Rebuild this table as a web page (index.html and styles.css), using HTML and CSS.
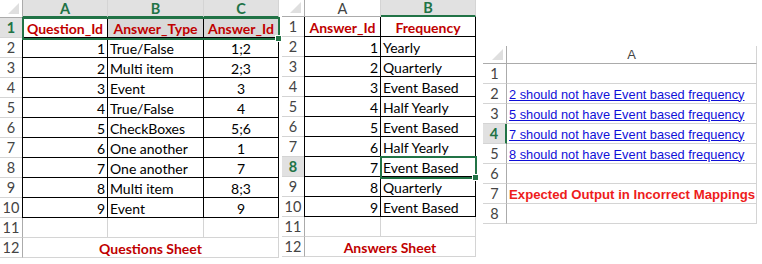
FILE: index.html
```html
<!DOCTYPE html>
<html>
<head>
<meta charset="utf-8">
<link rel="stylesheet" href="styles.css">
</head>
<body>
<div class="page">
  <div class="sheet s1">
    <div class="corner"></div>
    <div class="ch sel">A</div>
    <div class="ch sel">B</div>
    <div class="ch sel">C</div>

    <div class="rh rsel">1</div>
    <div class="c t tl hd ctr">Question_Id</div>
    <div class="c t hd ctr tint">Answer_Type</div>
    <div class="c t hd ctr tint">Answer_Id</div>

    <div class="rh">2</div><div class="c t tl r">1</div><div class="c t">True/False</div><div class="c t ctr">1;2</div>
    <div class="rh">3</div><div class="c t tl r">2</div><div class="c t">Multi item</div><div class="c t ctr">2;3</div>
    <div class="rh">4</div><div class="c t tl r">3</div><div class="c t">Event</div><div class="c t ctr">3</div>
    <div class="rh">5</div><div class="c t tl r">4</div><div class="c t">True/False</div><div class="c t ctr">4</div>
    <div class="rh">6</div><div class="c t tl r">5</div><div class="c t">CheckBoxes</div><div class="c t ctr">5;6</div>
    <div class="rh">7</div><div class="c t tl r">6</div><div class="c t">One another</div><div class="c t ctr">1</div>
    <div class="rh">8</div><div class="c t tl r">7</div><div class="c t">One another</div><div class="c t ctr">7</div>
    <div class="rh">9</div><div class="c t tl r">8</div><div class="c t">Multi item</div><div class="c t ctr">8;3</div>
    <div class="rh">10</div><div class="c t tl r">9</div><div class="c t">Event</div><div class="c t ctr">9</div>
    <div class="rh">11</div><div class="c"></div><div class="c"></div><div class="c"></div>
    <div class="rh">12</div><div class="c span3 hd ctr">Questions Sheet</div>

    <div class="selbox sel1"><span class="handle"></span></div>
  </div>

  <div class="sheet s2">
    <div class="corner"></div>
    <div class="ch">A</div>
    <div class="ch sel">B</div>

    <div class="rh">1</div><div class="c t tl hd ctr">Answer_Id</div><div class="c t hd ctr">Frequency</div>
    <div class="rh">2</div><div class="c t tl r">1</div><div class="c t">Yearly</div>
    <div class="rh">3</div><div class="c t tl r">2</div><div class="c t">Quarterly</div>
    <div class="rh">4</div><div class="c t tl r">3</div><div class="c t">Event Based</div>
    <div class="rh">5</div><div class="c t tl r">4</div><div class="c t">Half Yearly</div>
    <div class="rh">6</div><div class="c t tl r">5</div><div class="c t">Event Based</div>
    <div class="rh">7</div><div class="c t tl r">6</div><div class="c t">Half Yearly</div>
    <div class="rh rsel">8</div><div class="c t tl r">7</div><div class="c t">Event Based</div>
    <div class="rh">9</div><div class="c t tl r">8</div><div class="c t">Quarterly</div>
    <div class="rh">10</div><div class="c t tl r">9</div><div class="c t">Event Based</div>
    <div class="rh">11</div><div class="c"></div><div class="c"></div>
    <div class="rh">12</div><div class="c span2 hd ctr">Answers Sheet</div>

    <div class="selbox sel2"><span class="handle"></span></div>
  </div>

  <div class="sheet s3">
    <div class="corner"></div>
    <div class="ch ach">A</div>
    <div class="rh">1</div><div class="c"></div>
    <div class="rh">2</div><div class="c"><a class="lnk">2 should not have Event based frequency</a></div>
    <div class="rh">3</div><div class="c"><a class="lnk">5 should not have Event based frequency</a></div>
    <div class="rh rsel rsel3">4</div><div class="c"><a class="lnk">7 should not have Event based frequency</a></div>
    <div class="rh">5</div><div class="c"><a class="lnk">8 should not have Event based frequency</a></div>
    <div class="rh">6</div><div class="c"></div>
    <div class="rh">7</div><div class="c"><span class="exp">Expected Output in Incorrect Mappings</span></div>
    <div class="rh">8</div><div class="c"></div>
  </div>
</div>
</body>
</html>
```

FILE: styles.css
```css
html, body {
  margin: 0;
  padding: 0;
  background: #ffffff;
}

.page {
  display: flex;
  align-items: flex-start;
  width: 762px;
  height: 264px;
  overflow: hidden;
  font-family: Lato, "Liberation Sans", sans-serif;
  font-size: 14px;
  color: #000;
}

.sheet {
  display: grid;
  position: relative;
}

.s1 {
  grid-template-columns: 23px 85px 96px 75px;
  grid-template-rows: 18px repeat(12, 20px);
}

.s2 {
  margin-left: 3px;
  grid-template-columns: 23px 76px 95px;
  grid-template-rows: 17px repeat(12, 20px);
}

.s3 {
  margin-left: 7px;
  margin-top: 46px;
  grid-template-columns: 24px 250px;
  grid-template-rows: 18px repeat(8, 20px);
}

.corner {
  position: relative;
  box-sizing: border-box;
  border-right: 1px solid #ababab;
  border-bottom: 1px solid #ababab;
  background: #ffffff;
}

.corner::after {
  content: "";
  position: absolute;
  right: 3px;
  bottom: 3px;
  width: 0;
  height: 0;
  border-left: 11px solid transparent;
  border-bottom: 11px solid #dfdfdf;
}

.ch {
  box-sizing: border-box;
  border-right: 1px solid #d4d4d4;
  border-bottom: 1px solid #ababab;
  background: #ffffff;
  color: #444;
  display: flex;
  align-items: center;
  justify-content: center;
  font-size: 14.5px;
}

.ach {
  font-family: "Liberation Sans", Arial, sans-serif;
  font-size: 13px;
}

.ch.sel {
  background: #e1e1e1;
  color: #217346;
  font-weight: bold;
  border-bottom: 2px solid #217346;
}

.rh {
  box-sizing: border-box;
  border-right: 1px solid #ababab;
  border-bottom: 1px solid #d4d4d4;
  background: #ffffff;
  color: #444;
  display: flex;
  align-items: center;
  justify-content: center;
  font-size: 14.5px;
}

.rh.rsel {
  background: #e1e1e1;
  color: #217346;
  font-weight: bold;
}

.rh.rsel3 {
  border-right: 2px solid #217346;
}

.c {
  box-sizing: border-box;
  border-right: 1px solid #d4d4d4;
  border-bottom: 1px solid #d4d4d4;
  display: flex;
  align-items: center;
  padding: 1px 2px 0;
  white-space: nowrap;
  overflow: visible;
}

.c.t {
  border-right-color: #000;
  border-bottom-color: #000;
}

.c.tl {
  box-shadow: -1px 0 0 #000;
}

.r { justify-content: flex-end; }
.ctr { justify-content: center; }

.hd {
  color: #c00000;
  font-weight: bold;
}

.tint {
  background: #d9d9d9;
}

.span3 {
  grid-column: span 3;
}

.span2 {
  grid-column: span 2;
}

.lnk {
  font-family: "Liberation Sans", Arial, sans-serif;
  font-size: 12.8px;
  color: #1010d8;
  text-decoration: underline;
}

.exp {
  font-family: "Liberation Sans", Arial, sans-serif;
  font-size: 13.2px;
  font-weight: bold;
  color: #ee1c1c;
}

.selbox {
  position: absolute;
  box-sizing: border-box;
  border: 2px solid #217346;
  pointer-events: none;
}

.sel1 {
  left: 22px;
  top: 17px;
  width: 258px;
  height: 23px;
}

.sel2 {
  left: 98px;
  top: 156px;
  width: 97px;
  height: 23px;
}

.handle {
  position: absolute;
  right: -4px;
  bottom: -4px;
  width: 5px;
  height: 5px;
  background: #217346;
  border: 1px solid #ffffff;
}
```
